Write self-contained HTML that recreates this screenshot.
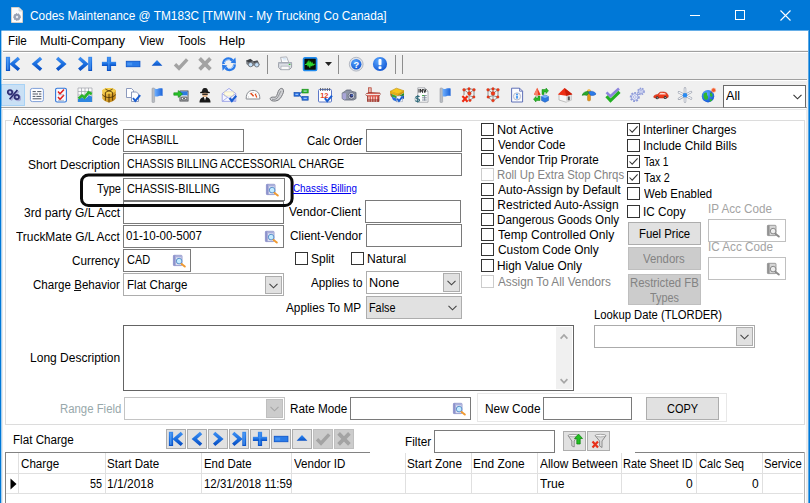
<!DOCTYPE html>
<html><head><meta charset="utf-8"><title>Codes Maintenance</title>
<style>

html,body{margin:0;padding:0;background:#fff;}
body{width:810px;height:503px;overflow:hidden;position:relative;font-family:"Liberation Sans",sans-serif;font-size:12px;}
#win{position:absolute;left:0;top:0;width:810px;height:503px;overflow:hidden;background:#fff;}
#win *{box-sizing:border-box;}
.a{position:absolute;}
.t{position:absolute;transform-origin:0 0;white-space:pre;line-height:14px;font-size:12px;font-family:"Liberation Sans",sans-serif;}
.in{position:absolute;background:#fff;border:1px solid #7a7a7a;}
.ind{position:absolute;background:#fff;border:1px solid #c0c0c0;}
.cb{position:absolute;width:13px;height:13px;background:#fff;border:1px solid #333;}
.cbd{position:absolute;width:13px;height:13px;background:#fff;border:1px solid #ccc;}
.btn{position:absolute;background:#e1e1e1;border:1px solid #adadad;}
.btnd{position:absolute;background:#ccc;border:1px solid #bfbfbf;}
.dd{position:absolute;background:#e1e1e1;border:1px solid #adadad;}
.ic{position:absolute;width:16px;height:16px;overflow:visible;z-index:2;}
.hl{position:absolute;height:1px;}
.vl{position:absolute;width:1px;}

</style></head>
<body>
<svg width="0" height="0" style="position:absolute">
<defs>
<linearGradient id="gb" x1="0" y1="0" x2="0" y2="1"><stop offset="0" stop-color="#3b8cf0"/><stop offset=".5" stop-color="#1b6fe0"/><stop offset="1" stop-color="#0a50c4"/></linearGradient>
<linearGradient id="gbh" x1="0" y1="0" x2="1" y2="0"><stop offset="0" stop-color="#4a9af5"/><stop offset="1" stop-color="#0a50c4"/></linearGradient>
<radialGradient id="gball" cx=".4" cy=".3" r=".8"><stop offset="0" stop-color="#5aa8ff"/><stop offset="1" stop-color="#0b4fd0"/></radialGradient>
<linearGradient id="ggold" x1="0" y1="0" x2="1" y2="1"><stop offset="0" stop-color="#ffd75a"/><stop offset="1" stop-color="#b8780a"/></linearGradient>
<linearGradient id="gflag" x1="0" y1="0" x2="1" y2="0"><stop offset="0" stop-color="#6fb0ff"/><stop offset="1" stop-color="#1a62d8"/></linearGradient>

<symbol id="first" viewBox="0 0 16 16"><path d="M13.9 2 L7.1 7.9 L13.9 13.8" fill="none" stroke="url(#gb)" stroke-width="3.5"/><rect x="0.9" y="0.8" width="4.2" height="14.2" fill="url(#gb)"/><rect x="1.9" y="1.8" width="1.6" height="12" fill="#5aa4f8" opacity=".7"/></symbol>
<symbol id="prev" viewBox="0 0 16 16"><path d="M12.1 2 L5.3 7.9 L12.1 13.8" fill="none" stroke="url(#gb)" stroke-width="3.5"/></symbol>
<symbol id="next" viewBox="0 0 16 16"><path d="M4.1 2 L10.9 7.9 L4.1 13.8" fill="none" stroke="url(#gb)" stroke-width="3.5"/></symbol>
<symbol id="last" viewBox="0 0 16 16"><path d="M2.2 2 L9 7.9 L2.2 13.8" fill="none" stroke="url(#gb)" stroke-width="3.5"/><rect x="11.3" y="0.8" width="3.8" height="14.2" fill="url(#gb)"/><rect x="12.3" y="1.8" width="1.5" height="12" fill="#5aa4f8" opacity=".7"/></symbol>
<symbol id="plus" viewBox="0 0 16 16"><rect x="5.9" y="0.8" width="4.2" height="14.2" fill="url(#gb)"/><rect x="0.9" y="5.8" width="14.2" height="4.2" fill="url(#gb)"/><rect x="7" y="1.8" width="1.6" height="12" fill="#4a9af5" opacity=".6"/></symbol>
<symbol id="minus" viewBox="0 0 16 16"><rect x="1.3" y="5.3" width="13.6" height="5.4" fill="#2a7be8" stroke="#0f58cc" stroke-width=".9"/><rect x="2.2" y="6.6" width="5" height="2.8" fill="#5aa4f8" opacity=".6"/></symbol>
<symbol id="up" viewBox="0 0 16 16"><path d="M8 4 L13.4 9.8 H2.6 Z" fill="url(#gb)"/></symbol>
<symbol id="checkg" viewBox="0 0 16 16"><path d="M2 8.3 L6 12.2 L14.2 3.4" fill="none" stroke="#a3a3a3" stroke-width="3.4"/></symbol>
<symbol id="xg" viewBox="0 0 16 16"><path d="M2.6 2.4 L13.4 13.4 M13.4 2.4 L2.6 13.4" fill="none" stroke="#a3a3a3" stroke-width="3.7"/></symbol>
<symbol id="refresh" viewBox="0 0 16 16"><path d="M2.6 8 C2.2 4 6 1.8 9.5 3 L11.6 4.6" fill="none" stroke="#2a7ae8" stroke-width="2.8"/><path d="M9.6 6.8 L15 7.6 L14.4 1.6 Z" fill="#2a7ae8"/><path d="M13.4 8.4 C13.8 12.4 10 14.6 6.5 13.4 L4.4 11.8" fill="none" stroke="#2a7ae8" stroke-width="2.8"/><path d="M6.4 9.6 L1 8.8 L1.6 14.8 Z" fill="#2a7ae8"/><path d="M3.4 7 C3.6 4.6 6.5 3.2 9 4" fill="none" stroke="#a8d0ff" stroke-width="1"/><path d="M12.6 9.4 C12.4 11.8 9.5 13.2 7 12.4" fill="none" stroke="#a8d0ff" stroke-width="1"/></symbol>
<symbol id="binoc" viewBox="0 0 16 16"><path d="M1 4.6 L5.5 2.8 L8.2 5.2 L12.5 4.4 L14.8 8.4 L12.6 11 L9 9.6 L7.4 10.2 L4.2 10.4 L1.4 8 Z" fill="#7c8086"/><path d="M1.2 4.8 L5.5 3 L8 5 L3.6 6.4 Z" fill="#3a3d42"/><path d="M8 5.3 L12.4 4.6 L13.6 6.4 L9 7.2 Z" fill="#4a4d52"/><circle cx="5.6" cy="8.6" r="2.2" fill="#c4e0fa" stroke="#686c72" stroke-width=".8"/><circle cx="11.8" cy="8.8" r="2.2" fill="#c4e0fa" stroke="#686c72" stroke-width=".8"/></symbol>
<symbol id="printer" viewBox="0 0 16 16"><path d="M3.6 1.4 L9.6 0.9 L11.8 6.5 H4.8 Z" fill="#fefefe" stroke="#9aa0aa" stroke-width=".8"/><path d="M1.6 6.6 H14.6 V11.4 L12.4 13.6 H3.6 L1.6 11.4 Z" fill="#dcdfe5" stroke="#858b96" stroke-width=".8"/><path d="M4 10.2 H12.2 V13.6 H4 Z" fill="#fbfbfb" stroke="#9a9fa8" stroke-width=".6"/><circle cx="12.6" cy="8.2" r=".9" fill="#34c034"/><path d="M1.6 6.6 H14.6 V7.8 H1.6Z" fill="#b9bec8"/><path d="M5.5 2.6 L9 2.3 M5.9 4 L9.6 3.8" stroke="#b8d4ee" stroke-width=".6"/></symbol>
<symbol id="monitor" viewBox="0 0 16 16"><rect x="1.6" y="1.9" width="13" height="12.6" rx="1.2" fill="#071007" stroke="#1f8bf0" stroke-width="1.7"/><path d="M3 8.5 H4.6 L5.3 6.8 L6.1 10.4 L6.9 4.6 L7.8 11.6 L8.6 5.6 L9.4 10.2 L10.2 7.2 L11 9.2 L11.7 8.2 H13.2" fill="none" stroke="#2bd630" stroke-width="1.15"/></symbol>
<symbol id="help" viewBox="0 0 16 16"><circle cx="8.2" cy="8.2" r="6.9" fill="#dfe3ea" stroke="#a4abb8" stroke-width=".8"/><circle cx="8.2" cy="8.2" r="5.2" fill="url(#gball)"/><text x="8.2" y="11.5" text-anchor="middle" font-family="Liberation Sans" font-weight="bold" font-size="9.2" fill="#fff">?</text></symbol>
<symbol id="info" viewBox="0 0 16 16"><circle cx="8" cy="8" r="7.1" fill="url(#gball)"/><rect x="6.5" y="3" width="3" height="6.2" rx="1" fill="#fff"/><rect x="6.5" y="10.3" width="3" height="2.8" rx=".8" fill="#fff"/></symbol>

<symbol id="pct" viewBox="0 0 16 16"><g fill="none" stroke="#a9abd8" stroke-width="2" transform="translate(1.3,1.1)"><ellipse cx="5" cy="5.2" rx="2.2" ry="2.2"/><ellipse cx="11.8" cy="10" rx="2.2" ry="2.2"/><path d="M12.4 3 L4.6 12.3"/></g><g fill="none" stroke="#2c2c72" stroke-width="1.7"><ellipse cx="5" cy="5.2" rx="2.2" ry="2.2"/><ellipse cx="11.8" cy="10" rx="2.2" ry="2.2"/><path d="M12.4 3 L4.6 12.3"/></g></symbol>
<symbol id="listdoc" viewBox="0 0 16 16"><rect x="1.4" y="1.4" width="13" height="13.2" rx="2" fill="#fdfdff" stroke="#7f9fd8" stroke-width="1"/><path d="M3.6 4.6 H6.8 M8.2 4.6 H12.4 M3.6 7 H9 M10 7 H12.4 M3.6 9.4 H6.4 M7.4 9.4 H12.4 M3.6 11.8 H12.4" stroke="#4e5563" stroke-width="1"/></symbol>
<symbol id="checklist" viewBox="0 0 16 16"><rect x="2.6" y="1.2" width="10.8" height="13.8" rx="1.5" fill="#f8faff" stroke="#2f74d8" stroke-width="1.1"/><path d="M5 4.5 L7 6.8 L11 2.6 M5 10 L7 12.3 L11 8" fill="none" stroke="#e02020" stroke-width="1.5"/><path d="M5 7.8 H11 M5 13.3 H11" stroke="#9aa4b8" stroke-width=".7"/></symbol>
<symbol id="chart" viewBox="0 0 16 16"><rect x="1" y="1" width="14" height="14" fill="#fbfbfb"/><path d="M1 1 V15 M4.5 1 V15 M8 1 V15 M11.5 1 V15 M15 1 V15 M1 1 H15 M1 4.5 H15 M1 8 H15" stroke="#9da2ab" stroke-width=".7"/><path d="M1 15 L1 12 L5 10.5 L8 12 L12 8.5 L15 9.5 V15 Z" fill="#2f86e0"/><path d="M1.5 11.5 L5 8.6 L7.5 10.6 L11.5 5.4 L14.8 7" fill="none" stroke="#2bb42b" stroke-width="2.6"/></symbol>
<symbol id="cube" viewBox="0 0 16 16"><path d="M8 1 C11 1 14.8 2.2 14.8 4 V11 C14.8 13 10 15.4 8 15.4 C6 15.4 1.2 13 1.2 11 V4 C1.2 2.2 5 1 8 1 Z" fill="url(#ggold)"/><path d="M8 1 C11 1 14.8 2.2 14.8 4 C13 6 10 6.8 8 6.8 C6 6.8 3 6 1.2 4 C1.2 2.2 5 1 8 1 Z" fill="#f6cf4a"/><path d="M8 6.8 V15.4 M1.2 7.6 C3 9.6 6 10.6 8 10.6 C10 10.6 13 9.6 14.8 7.6 M4.4 2 C6 3.4 9.5 4.2 11.6 5.4 V13.6 M11.6 2 C10 3.4 6.5 4.2 4.4 5.4 V13.6" fill="none" stroke="#4e3304" stroke-width=".9"/></symbol>
<symbol id="docs" viewBox="0 0 16 16"><path d="M1.5 1.5 H6.5 L8.5 3.5 V10.5 H1.5 Z" fill="#fff" stroke="#7f8fb5" stroke-width=".9"/><path d="M6.5 5 H11.5 L13.5 7 V14.5 H6.5 Z" fill="#fff" stroke="#7f8fb5" stroke-width=".9"/><path d="M8 11 L10.3 14 L15.2 8.2" fill="none" stroke="#1a5ed0" stroke-width="2"/></symbol>
<symbol id="flag" viewBox="0 0 16 16"><rect x="3" y="1" width="2.6" height="14.5" rx=".8" fill="#b9bcc2" stroke="#8d9198" stroke-width=".5"/><path d="M5.6 1.6 C8 2.8 10 .6 13.6 1.4 V9 C10 8.2 8 10.4 5.6 9.2 Z" fill="url(#gflag)"/></symbol>
<symbol id="arrowbox" viewBox="0 0 16 16"><rect x="7" y="4" width="8" height="10" fill="#fff" stroke="#3a3d42" stroke-width=".9"/><rect x="7.4" y="4.4" width="7.2" height="4" fill="#2d7be0"/><path d="M8.3 10 H13.8 V13 H8.3 Z M9.6 10.6 L12.5 12.4 M12.5 10.6 L9.6 12.4" fill="none" stroke="#3a3d42" stroke-width=".8"/><path d="M0.8 5.8 H5.2 V3.6 L9.6 7 L5.2 10.4 V8.2 H0.8 Z" fill="#28c428" stroke="#148a14" stroke-width=".6"/></symbol>
<symbol id="spy" viewBox="0 0 16 16"><path d="M2.5 15.5 C2.5 11.5 5 10 8 10 C11 10 13.5 11.5 13.5 15.5 Z" fill="#181818"/><ellipse cx="8" cy="7" rx="2.8" ry="3.2" fill="#e2b48a"/><path d="M6.8 10 L8 13.5 L9.2 10 Z" fill="#f2f2f2"/><path d="M3 5.3 C5 4 11 4 13 5.3 L12.5 6.3 C10 5.6 6 5.6 3.5 6.3 Z" fill="#111"/><path d="M5 5 C5 1.5 6.5 1 8 1 C9.5 1 11 1.5 11 5 Z" fill="#1c1c1c"/><rect x="5.3" y="6.6" width="5.4" height="1.3" fill="#222"/></symbol>
<symbol id="envelope" viewBox="0 0 16 16"><path d="M1.2 6.6 L8 1.4 L14.8 6.6 V14.4 H1.2 Z" fill="#f6f7ff" stroke="#9aa2e6" stroke-width=".9"/><path d="M3.4 4.8 H12.6 V9 H3.4 Z" fill="#fffbe0" stroke="#dcd8a8" stroke-width=".5"/><path d="M1.2 6.6 L8 11.4 L14.8 6.6 M1.2 14.4 L6.5 10.4 M14.8 14.4 L9.5 10.4" fill="none" stroke="#9aa2e6" stroke-width=".8"/><path d="M8.6 11.2 L10.8 14 L15.2 8.8" fill="none" stroke="#1a5ed0" stroke-width="2.1"/></symbol>
<symbol id="gauge" viewBox="0 0 16 16"><path d="M1.2 11.4 C1.2 5.5 4.5 3.4 8 3.4 C11.5 3.4 14.8 5.5 14.8 11.4 V12 H1.2 Z" fill="#fdfdfd" stroke="#85898f" stroke-width="1"/><path d="M3 10.2 L3.8 9.8 M4.6 6.6 L5.3 7.2 M8 5 V6 M11.4 6.6 L10.7 7.2" stroke="#999" stroke-width=".7"/><path d="M5.6 6 L8.6 9.2" stroke="#e04818" stroke-width="1.4"/><path d="M10.2 6.8 L11.8 10.4" stroke="#e04818" stroke-width="1.2"/></symbol>
<symbol id="phone" viewBox="0 0 16 16"><path d="M13 1.5 C15 2 15 5 13.5 7.5 C12 10.5 10.5 13.5 6.5 14 C3.5 14.4 1 13.5 1.2 11.5 C1.5 9.8 4.5 10 6.5 10.2 C8.5 8.5 8.5 5 10 3 C11 1.5 12 1.2 13 1.5 Z" fill="#cfd0d3" stroke="#77797e" stroke-width="1"/><path d="M3 12.2 C4.5 12.8 6.5 12.5 8 11.2 C9.5 9.5 10.5 6.5 12 4" fill="none" stroke="#8b8d92" stroke-width=".9"/></symbol>
<symbol id="tree" viewBox="0 0 16 16"><path d="M6 7.4 L9.4 4.4 M6 7.4 L9.4 11.4" stroke="#2b66c8" stroke-width="1.1"/><rect x="1" y="5.4" width="5.6" height="3.8" fill="#2a6fe0" stroke="#124aa8" stroke-width=".6"/><rect x="9" y="2.2" width="6.2" height="3.8" fill="#2fb52f" stroke="#148a14" stroke-width=".6"/><rect x="9" y="9.4" width="6.2" height="3.8" fill="#2a6fe0" stroke="#124aa8" stroke-width=".6"/><path d="M2.4 7.3 H5.2 M10.6 4.1 H13.8 M10.6 11.3 H13.8" stroke="#cfe6ff" stroke-width=".9"/></symbol>
<symbol id="calendar" viewBox="0 0 16 16"><rect x="1.5" y="2.5" width="13" height="12.5" rx="1" fill="#fdfdff" stroke="#5d78c8" stroke-width="1"/><path d="M3.5 1 V4 M5.8 1 V4 M8.1 1 V4 M10.4 1 V4 M12.6 1 V4" stroke="#5b5f68" stroke-width=".9"/><text x="3.2" y="10.6" font-family="Liberation Sans" font-weight="bold" font-size="7.5" fill="#e8441a">12</text><path d="M7.8 11.2 L10.2 14.2 L15 8.6" fill="none" stroke="#1a5ed0" stroke-width="2"/></symbol>
<symbol id="camera" viewBox="0 0 16 16"><path d="M1.2 6 L3.8 4.6 L5.4 3 H9.6 L11 4.4 L15 5.4 V11.6 L12.4 13 H3.4 L1.2 11.6 Z" fill="#8e95a6" stroke="#5d6374" stroke-width=".8"/><path d="M1.4 6.2 H5 V12 L3.4 12.8 L1.4 11.5 Z" fill="#a9a6d8"/><circle cx="10.4" cy="8.8" r="3.3" fill="#dfe3ec" stroke="#5d6374" stroke-width=".8"/><circle cx="10.4" cy="8.8" r="2" fill="#33386a"/><circle cx="11" cy="8.3" r=".8" fill="#4a7ae8"/></symbol>
<symbol id="factory" viewBox="0 0 16 16"><rect x="3.6" y=".8" width="2.6" height="6" fill="#e8b8b0" stroke="#b03a2a" stroke-width=".7"/><path d="M1 7 L4 5.5 L15 6 V8 L14 8.5 V14.5 H2.5 V9 L1 8.2 Z" fill="#d8564a" stroke="#8a2a20" stroke-width=".7"/><path d="M1 7 L15 6.8 V8 L1 8.3 Z" fill="#f2e4e0"/><path d="M4 9.5 V14.5 M6.5 9.5 V14.5 M9 9.5 V14.5 M11.5 9.5 V14.5" stroke="#f6d8d2" stroke-width="1.2"/><path d="M2.5 13 H14" stroke="#7a2018" stroke-width=".8"/></symbol>
<symbol id="books" viewBox="0 0 16 16"><path d="M1 4.4 L7.4 1.2 L15 3.8 L9 7.2 Z" fill="#f6c61c" stroke="#b88a08" stroke-width=".6"/><path d="M1 4.4 L9 7.2 V9.2 L1 6.4 Z" fill="#e6ac10"/><path d="M9 7.2 L15 3.8 V5.8 L9 9.2 Z" fill="#cc9808"/><path d="M1.3 6.6 L9 9.4 V11.8 L2 9.4 Z" fill="#36a836"/><path d="M9 9.4 L15 6 V8.4 L9 11.8 Z" fill="#268a26"/><path d="M1.3 6.6 L2.3 7 L3 9.8 L2 9.4 Z" fill="#e03a2a"/><path d="M2.4 9.6 L9 12 V15.2 L4 13 Z" fill="#2a6fe0"/><path d="M9 12 L15 8.6 V11.4 L9 15.2 Z" fill="#1a52b8"/><rect x="7.6" y="9" width="6" height="5.8" fill="#f4f6fb" stroke="#8f98ad" stroke-width=".5"/><path d="M8.2 11.6 L10 14 L13.6 9.4" fill="none" stroke="#1a5ed0" stroke-width="1.8"/></symbol>
<symbol id="inv" viewBox="0 0 16 16"><path d="M4.8 .8 H11.6 L15 4.2 V15.2 H4.8 Z" fill="#fcfcfc" stroke="#9a9da3" stroke-width=".8"/><path d="M11.6 .8 V4.2 H15" fill="none" stroke="#9a9da3" stroke-width=".7"/><path d="M6 2 V5.6 M7.4 5.6 V2 L9.6 5.6 V2 M10.6 2 L11.8 5.6 L13 2" fill="none" stroke="#222" stroke-width=".95"/><path d="M9 8.6 H13.8 M9 10.8 H13.8 M9 13 H13.8 M11.6 8 V13.6" stroke="#7a8796" stroke-width=".9"/><path d="M9.2 8.6 H11.2" stroke="#3ab03a" stroke-width="1"/><path d="M6.4 10 C6 9 2.8 8.8 2.8 10.4 C2.8 12 6.6 11.6 6.6 13.2 C6.6 14.8 3 14.8 2.4 13.6" fill="none" stroke="#2e6a7a" stroke-width="1.2"/><path d="M4.6 8.2 V15.6" stroke="#2e6a7a" stroke-width=".9"/><path d="M1.2 11.4 H5 M1.2 12.8 H5" stroke="#2e6a7a" stroke-width=".5" opacity=".5"/></symbol>
<symbol id="mol" viewBox="0 0 16 16"><path d="M3 2.6 L8 1.6 L13 2.6 V10.2 L8 14 L3 10.2 Z M3 2.6 L8 6.6 L13 2.6 M8 6.6 V14 M8 1.6 V6.6 M3 10.2 L8 8.6 L13 10.2" fill="none" stroke="#7a7a7a" stroke-width=".8"/><g fill="#f03a18" stroke="#b01e08" stroke-width=".3"><circle cx="8" cy="1.9" r="1.3"/><circle cx="3" cy="2.8" r="1.4"/><circle cx="13" cy="2.8" r="1.4"/><circle cx="8" cy="6.4" r="1.9"/><circle cx="3.2" cy="10" r="1.3"/><circle cx="12.8" cy="10" r="1.3"/><circle cx="8" cy="13.6" r="1.4"/></g></symbol>
<symbol id="molx" viewBox="0 0 16 16"><path d="M3 2.6 L8 1.6 L13 2.6 V10.2 L8 14 M3 2.6 L8 6.6 L13 2.6 M8 6.6 V14 M8 1.6 V6.6 M8 8.6 L13 10.2 M3 2.6 V8" fill="none" stroke="#7a7a7a" stroke-width=".8"/><g fill="#f03a18" stroke="#b01e08" stroke-width=".3"><circle cx="8" cy="1.9" r="1.3"/><circle cx="3" cy="2.8" r="1.4"/><circle cx="13" cy="2.8" r="1.4"/><circle cx="8.4" cy="6.4" r="1.8"/><circle cx="12.8" cy="10" r="1.3"/><circle cx="9" cy="13.4" r="1.2"/></g><path d="M1.4 9 L6.6 14.8 M6.6 9 L1.4 14.8" stroke="#ee2a12" stroke-width="2.1"/></symbol>
<symbol id="infodoc" viewBox="0 0 16 16"><path d="M2.6 1.2 H10.6 L13.6 4.2 V15 H2.6 Z" fill="#fbfcff" stroke="#4f62b0" stroke-width=".9"/><path d="M10.6 1.2 V4.2 H13.6" fill="none" stroke="#4f62b0" stroke-width=".8"/><circle cx="8" cy="9.4" r="3.6" fill="#f2f3f7" stroke="#b4b8c6" stroke-width=".9"/><rect x="7.2" y="8.8" width="1.6" height="2.8" fill="#2a8af0"/><circle cx="8" cy="7.4" r=".9" fill="#2a8af0"/></symbol>
<symbol id="shapes" viewBox="0 0 16 16"><path d="M4.2 .8 L7.6 7.6 C6 8.8 2.6 8.8 1 7.6 Z" fill="#e83a1a"/><path d="M4.2 .8 L5.2 7.9 C4 8.3 2.4 8.2 1 7.6 Z" fill="#f8806a"/><path d="M9 2.5 H13 V1 L15.5 3.8 L13 6.6 V5 H11 V7.5 H9 Z" fill="#2ab82a" stroke="#0f8a0f" stroke-width=".5"/><path d="M7 13.5 H3 V15 L.5 12.2 L3 9.4 V11 H5 V9 H7 Z" fill="#2ab82a" stroke="#0f8a0f" stroke-width=".5"/><path d="M8.5 9.5 L12 8 L15.5 9.5 V13.5 L12 15.3 L8.5 13.5 Z" fill="#2a78e0" stroke="#1450b0" stroke-width=".5"/><path d="M8.5 9.5 L12 11 L15.5 9.5 L12 8 Z" fill="#7ab4f8"/></symbol>
<symbol id="house" viewBox="0 0 16 16"><path d="M2 7.5 H14.5 V13 L9 15.2 L2 13 Z" fill="#f6f6f6" stroke="#a8a8a8" stroke-width=".7"/><path d="M9 8 V15.2 L14.5 13 V7.5 Z" fill="#dedede"/><path d="M0.8 7.6 L7.5 1 L15.4 7.2 L9.2 8.8 Z" fill="#ee2e14"/><path d="M7.5 1 L15.4 7.2 L9.2 8.8 Z" fill="#c81c08"/><rect x="10.8" y="9.5" width="2" height="3.8" fill="#555"/></symbol>
<symbol id="umbrella" viewBox="0 0 16 16"><rect x="6.6" y="3" width="2.8" height="10.8" rx=".9" fill="#e89a1a" stroke="#a86408" stroke-width=".5"/><path d="M1.2 8.4 C1.4 6 4 4.2 7.6 4.4 C8.4 5.6 7.6 7.4 5.6 8.4 C4 8 2.4 8 1.2 8.4 Z" fill="#2aa82a" stroke="#0f7a0f" stroke-width=".5"/><path d="M7.6 4.6 C10 3.6 14 4.4 15 7 C14 8.4 11.5 8.8 9.4 8.2 C8.4 7.2 7.8 6 7.6 4.6 Z" fill="#2a7ae8" stroke="#1450b0" stroke-width=".5"/><rect x="6.4" y="2.4" width="3.2" height="1.8" rx=".8" fill="#f8c040"/></symbol>
<symbol id="checks" viewBox="0 0 16 16"><path d="M1.5 5.3 L5.5 9.3 L14 1.5" fill="none" stroke="#8d84dc" stroke-width="2.6"/><path d="M1.5 9.3 L5.5 13.6 L14.5 4.8" fill="none" stroke="#22b022" stroke-width="3.1"/></symbol>
<symbol id="gears" viewBox="0 0 16 16"><g fill="#e8ecfa" stroke="#8f9bd8"><circle cx="5.8" cy="10" r="3.9" stroke-dasharray="1.7 1.2" stroke-width="2.2"/><circle cx="5.8" cy="10" r="3.3" stroke-width=".9"/><circle cx="12" cy="4.4" r="2.9" stroke-dasharray="1.4 1" stroke-width="1.9"/><circle cx="12" cy="4.4" r="2.4" stroke-width=".8"/></g><circle cx="5.8" cy="10" r="1.3" fill="#fff" stroke="#8f9bd8" stroke-width=".7"/><circle cx="12" cy="4.4" r="1" fill="#fff" stroke="#8f9bd8" stroke-width=".7"/></symbol>
<symbol id="car" viewBox="0 0 16 16"><path d="M0.8 9.4 C1 8.2 3 7.6 4.6 7.4 L7 5.2 C9 4.7 12 4.9 13.4 5.8 L15.2 8.2 V10.2 L13.6 11 H2.4 L0.8 10.4 Z" fill="#ee3a1a" stroke="#b02008" stroke-width=".5"/><path d="M5.8 7.4 L7.6 5.8 C9 5.5 11 5.6 12.2 6.2 L13 7.6 Z" fill="#fbd8d0"/><circle cx="4.2" cy="10.8" r="1.5" fill="#333"/><circle cx="12.2" cy="10.6" r="1.5" fill="#333"/><circle cx="4.2" cy="10.8" r=".6" fill="#ccc"/><circle cx="12.2" cy="10.6" r=".6" fill="#ccc"/></symbol>
<symbol id="star" viewBox="0 0 16 16"><path d="M8 1.6 V14.6 M2 5.4 L14 11.4 M14 5 L2 11.8" stroke="#9aa0ad" stroke-width="2.5" stroke-linecap="round"/><path d="M8 1.6 V14.6 M2 5.4 L14 11.4 M14 5 L2 11.8" stroke="#f4f5f8" stroke-width="1.2" stroke-linecap="round"/><circle cx="8" cy="8.2" r="2.3" fill="#2a8af0"/></symbol>
<symbol id="globe" viewBox="0 0 16 16"><circle cx="7" cy="9.2" r="6.2" fill="url(#gball)"/><path d="M3 6.4 C4.5 4.9 6.5 5.4 6 7.2 C5.5 8.4 7.5 8.9 7 10.9 C6.5 12.9 4.5 13.4 3.5 11.9 C2.5 10.4 2 7.9 3 6.4 Z M9 5.9 C10.5 5.4 12 6.9 11.5 8.9 C11 10.4 9.5 9.9 9 8.4 Z M8.5 12.4 C9.5 11.4 11.5 11.9 11 13.4 C10 14.9 8.5 14.9 8.5 12.4 Z" fill="#2fb82f"/><path d="M9.5 6 L12 3.6" stroke="#444" stroke-width=".8"/><circle cx="12.6" cy="3.2" r="2.1" fill="#f05a28" stroke="#fbb09a" stroke-width=".7"/></symbol>

<symbol id="lookup" viewBox="0 0 14 14"><rect x="1.4" y="1.3" width="8.6" height="10.3" rx=".8" fill="#dcdff0" stroke="#8489c4" stroke-width=".8"/><rect x="1.4" y="1.3" width="2.2" height="10.3" fill="#8d92cc"/><rect x="3.6" y="1.7" width="6" height="1.6" fill="#a9aedc"/><circle cx="7.1" cy="7.1" r="2.8" fill="#c4ecff" stroke="#5f93cc" stroke-width="1"/><path d="M9.6 9.9 L12.8 12.6" stroke="#f09a30" stroke-width="1.9" stroke-linecap="round"/></symbol>
<symbol id="lookupd" viewBox="0 0 14 14"><rect x="1.4" y="1.3" width="8.6" height="10.3" rx=".8" fill="#d6d6d6" stroke="#8c8c8c" stroke-width=".8"/><rect x="1.4" y="1.3" width="2.2" height="10.3" fill="#929292"/><circle cx="7.1" cy="7.1" r="2.8" fill="#ededed" stroke="#8a8a8a" stroke-width="1"/><path d="M9.6 9.9 L12.8 12.6" stroke="#8a8a8a" stroke-width="1.9" stroke-linecap="round"/></symbol>
<symbol id="funnelup" viewBox="0 0 16 16"><path d="M1 2.5 C3 1.2 9 1.2 11 2.5 L7.2 8 V14 L4.8 12.8 V8 Z" fill="#dcdcdc" stroke="#7a7a7a" stroke-width=".8"/><ellipse cx="6" cy="2.6" rx="4.8" ry="1.2" fill="#f4f4f4" stroke="#8a8a8a" stroke-width=".6"/><path d="M11.5 1 L15.5 5.5 H13.2 V11 H9.8 V5.5 H7.5 Z" fill="#22c022" stroke="#0a800a" stroke-width=".7"/></symbol>
<symbol id="funnelx" viewBox="0 0 16 16"><path d="M4 2.5 C6 1.2 13 1.2 15 2.5 L11 8 V14.5 L8.6 13 V8 Z" fill="#dcdcdc" stroke="#7a7a7a" stroke-width=".8"/><ellipse cx="9.5" cy="2.6" rx="5.3" ry="1.3" fill="#f4f4f4" stroke="#8a8a8a" stroke-width=".6"/><path d="M1.5 8.5 L7 14.5 M7 8.5 L1.5 14.5" stroke="#e8301a" stroke-width="2.2"/></symbol>
</defs></svg>

<div id="win">
<div class="a" style="left:0;top:0;width:810px;height:30px;background:#0078d7"></div>
<div class="a" style="left:0;top:30px;width:810px;height:1px;background:#66aee7"></div>
<div class="a" style="left:0;top:30px;width:1px;height:473px;background:#0078d7"></div>
<div class="a" style="left:1px;top:30px;width:1px;height:473px;background:rgba(0,120,215,.35);z-index:5"></div>
<div class="a" style="left:806px;top:108px;width:2px;height:395px;background:#ececec;z-index:5"></div>
<div class="a" style="left:808px;top:30px;width:1px;height:473px;background:#59a7e4;z-index:5"></div>
<div class="a" style="left:809px;top:30px;width:1px;height:473px;background:#0078d7;z-index:5"></div>
<svg class="a" style="left:11px;top:7px" width="12" height="16" viewBox="0 0 12 16"><path d="M0.5 0.5 H8 L11.5 4 V15.5 H0.5 Z" fill="#fbfbfb" stroke="#d8d0c8" stroke-width="1"/><path d="M8 0.5 V4 H11.5" fill="#e8e8e8" stroke="#c8c8c8" stroke-width=".6"/><circle cx="6" cy="10" r="3.2" fill="#9aa3b5"/><circle cx="6" cy="10" r="1.2" fill="#e8ebf2"/><circle cx="6" cy="10" r="3.4" fill="none" stroke="#8891a6" stroke-width="1" stroke-dasharray="1.3 1.1"/></svg>
<div class="a" style="left:690px;top:15px;width:10px;height:1px;background:#fff"></div>
<div class="a" style="left:735px;top:10px;width:10px;height:10px;border:1px solid #fff"></div>
<svg class="a" style="left:780px;top:10px" width="11" height="11" viewBox="0 0 11 11"><path d="M0.5 0.5 L10.5 10.5 M10.5 0.5 L0.5 10.5" stroke="#fff" stroke-width="1.1"/></svg>
<div class="a" style="left:1px;top:50px;width:808px;height:58px;background:#f0f0f0"></div>
<div class="hl" style="left:3px;top:51px;width:805px;background:#a0a0a0"></div>
<div class="hl" style="left:3px;top:52px;width:805px;background:#fff"></div>
<div class="hl" style="left:3px;top:79px;width:804px;background:#a0a0a0"></div>
<div class="hl" style="left:3px;top:80px;width:804px;background:#fff"></div>
<div class="hl" style="left:1px;top:107px;width:806px;background:#a0a0a0"></div>
<div class="a" style="left:1px;top:108px;width:808px;height:2px;background:#fff"></div>
<div class="a" style="left:2px;top:109px;width:805px;height:400px;border:1px solid #e9e9e9;background:#fff"></div>
<svg class="ic" style="left:5.0px;top:56.0px;width:16px;height:16px" viewBox="0 0 16 16"><use href="#first"/></svg>
<svg class="ic" style="left:29.0px;top:56.0px;width:16px;height:16px" viewBox="0 0 16 16"><use href="#prev"/></svg>
<svg class="ic" style="left:53.0px;top:56.0px;width:16px;height:16px" viewBox="0 0 16 16"><use href="#next"/></svg>
<svg class="ic" style="left:77.0px;top:56.0px;width:16px;height:16px" viewBox="0 0 16 16"><use href="#last"/></svg>
<svg class="ic" style="left:101.0px;top:56.0px;width:16px;height:16px" viewBox="0 0 16 16"><use href="#plus"/></svg>
<svg class="ic" style="left:125.0px;top:56.0px;width:16px;height:16px" viewBox="0 0 16 16"><use href="#minus"/></svg>
<svg class="ic" style="left:149.0px;top:56.0px;width:16px;height:16px" viewBox="0 0 16 16"><use href="#up"/></svg>
<svg class="ic" style="left:173.0px;top:56.0px;width:16px;height:16px" viewBox="0 0 16 16"><use href="#checkg"/></svg>
<svg class="ic" style="left:197.0px;top:56.0px;width:16px;height:16px" viewBox="0 0 16 16"><use href="#xg"/></svg>
<svg class="ic" style="left:221.0px;top:56.0px;width:16px;height:16px" viewBox="0 0 16 16"><use href="#refresh"/></svg>
<svg class="ic" style="left:245.0px;top:56.0px;width:16px;height:16px" viewBox="0 0 16 16"><use href="#binoc"/></svg>
<div class="vl" style="left:267px;top:55px;height:19px;background:#8d8d8d"></div>
<div class="vl" style="left:338px;top:55px;height:19px;background:#8d8d8d"></div>
<div class="vl" style="left:395px;top:55px;height:19px;background:#8d8d8d"></div>
<div class="vl" style="left:402px;top:55px;height:19px;background:#8d8d8d"></div>
<svg class="ic" style="left:277.0px;top:56.0px;width:16px;height:16px" viewBox="0 0 16 16"><use href="#printer"/></svg>
<svg class="ic" style="left:301.5px;top:56.0px;width:16px;height:16px" viewBox="0 0 16 16"><use href="#monitor"/></svg>
<svg class="a" style="left:325px;top:62px" width="7" height="4" viewBox="0 0 7 4"><path d="M0 0 H7 L3.5 4 Z" fill="#222"/></svg>
<svg class="ic" style="left:348.0px;top:56.0px;width:16px;height:16px" viewBox="0 0 16 16"><use href="#help"/></svg>
<svg class="ic" style="left:372.0px;top:56.0px;width:16px;height:16px" viewBox="0 0 16 16"><use href="#info"/></svg>
<div class="a" style="left:1px;top:84px;width:24px;height:22px;background:#c9e0f5;border:1px solid #a8d2f5"></div>
<svg class="ic" style="left:5.0px;top:87.0px;width:16px;height:16px" viewBox="0 0 16 16"><use href="#pct"/></svg>
<svg class="ic" style="left:29.0px;top:87.0px;width:16px;height:16px" viewBox="0 0 16 16"><use href="#listdoc"/></svg>
<svg class="ic" style="left:53.0px;top:87.0px;width:16px;height:16px" viewBox="0 0 16 16"><use href="#checklist"/></svg>
<svg class="ic" style="left:77.0px;top:87.0px;width:16px;height:16px" viewBox="0 0 16 16"><use href="#chart"/></svg>
<svg class="ic" style="left:101.0px;top:87.0px;width:16px;height:16px" viewBox="0 0 16 16"><use href="#cube"/></svg>
<svg class="ic" style="left:125.0px;top:87.0px;width:16px;height:16px" viewBox="0 0 16 16"><use href="#docs"/></svg>
<svg class="ic" style="left:149.0px;top:87.0px;width:16px;height:16px" viewBox="0 0 16 16"><use href="#flag"/></svg>
<svg class="ic" style="left:173.0px;top:87.0px;width:16px;height:16px" viewBox="0 0 16 16"><use href="#arrowbox"/></svg>
<svg class="ic" style="left:197.0px;top:87.0px;width:16px;height:16px" viewBox="0 0 16 16"><use href="#spy"/></svg>
<svg class="ic" style="left:221.0px;top:87.0px;width:16px;height:16px" viewBox="0 0 16 16"><use href="#envelope"/></svg>
<svg class="ic" style="left:245.0px;top:87.0px;width:16px;height:16px" viewBox="0 0 16 16"><use href="#gauge"/></svg>
<svg class="ic" style="left:269.0px;top:87.0px;width:16px;height:16px" viewBox="0 0 16 16"><use href="#phone"/></svg>
<svg class="ic" style="left:293.0px;top:87.0px;width:16px;height:16px" viewBox="0 0 16 16"><use href="#tree"/></svg>
<svg class="ic" style="left:317.0px;top:87.0px;width:16px;height:16px" viewBox="0 0 16 16"><use href="#calendar"/></svg>
<svg class="ic" style="left:341.0px;top:87.0px;width:16px;height:16px" viewBox="0 0 16 16"><use href="#camera"/></svg>
<svg class="ic" style="left:365.0px;top:87.0px;width:16px;height:16px" viewBox="0 0 16 16"><use href="#factory"/></svg>
<svg class="ic" style="left:389.0px;top:87.0px;width:16px;height:16px" viewBox="0 0 16 16"><use href="#books"/></svg>
<svg class="ic" style="left:413.0px;top:87.0px;width:16px;height:16px" viewBox="0 0 16 16"><use href="#inv"/></svg>
<svg class="ic" style="left:437.0px;top:87.0px;width:16px;height:16px" viewBox="0 0 16 16"><use href="#flag"/></svg>
<svg class="ic" style="left:461.0px;top:87.0px;width:16px;height:16px" viewBox="0 0 16 16"><use href="#molx"/></svg>
<svg class="ic" style="left:485.0px;top:87.0px;width:16px;height:16px" viewBox="0 0 16 16"><use href="#mol"/></svg>
<svg class="ic" style="left:509.0px;top:87.0px;width:16px;height:16px" viewBox="0 0 16 16"><use href="#infodoc"/></svg>
<svg class="ic" style="left:533.0px;top:87.0px;width:16px;height:16px" viewBox="0 0 16 16"><use href="#shapes"/></svg>
<svg class="ic" style="left:557.0px;top:87.0px;width:16px;height:16px" viewBox="0 0 16 16"><use href="#house"/></svg>
<svg class="ic" style="left:581.0px;top:87.0px;width:16px;height:16px" viewBox="0 0 16 16"><use href="#umbrella"/></svg>
<svg class="ic" style="left:605.0px;top:87.0px;width:16px;height:16px" viewBox="0 0 16 16"><use href="#checks"/></svg>
<svg class="ic" style="left:629.0px;top:87.0px;width:16px;height:16px" viewBox="0 0 16 16"><use href="#gears"/></svg>
<svg class="ic" style="left:653.0px;top:87.0px;width:16px;height:16px" viewBox="0 0 16 16"><use href="#car"/></svg>
<svg class="ic" style="left:677.0px;top:87.0px;width:16px;height:16px" viewBox="0 0 16 16"><use href="#star"/></svg>
<svg class="ic" style="left:701.0px;top:87.0px;width:16px;height:16px" viewBox="0 0 16 16"><use href="#globe"/></svg>
<div class="a" style="left:723px;top:85px;width:83px;height:23px;background:#fff;border:1px solid #6a6a6a;border-bottom-color:#8a8a8a"></div>
<svg class="a" style="left:793px;top:94px" width="9" height="6" viewBox="0 0 9 6"><path d="M0.5 0.8 L4.5 4.8 L8.5 0.8" fill="none" stroke="#333" stroke-width="1.1"/></svg>
<div class="a" style="left:5px;top:120px;width:800px;height:305px;border:1px solid #dcdcdc"></div>
<div class="a" style="left:12.5px;top:114px;width:107px;height:14px;background:#fff"></div>
<div class="in" style="left:123px;top:129px;width:121px;height:23px;"></div>
<div class="in" style="left:366px;top:129px;width:96px;height:23px;"></div>
<div class="in" style="left:123px;top:153px;width:339px;height:23px;"></div>
<div class="in" style="left:123px;top:178px;width:162px;height:23px;"></div>
<div class="in" style="left:123px;top:201px;width:161px;height:23px;"></div>
<div class="in" style="left:365px;top:200px;width:96px;height:23px;"></div>
<div class="in" style="left:123px;top:225px;width:161px;height:23px;"></div>
<div class="in" style="left:366px;top:224px;width:96px;height:23px;"></div>
<div class="in" style="left:123px;top:249px;width:68px;height:23px;"></div>
<div class="in" style="left:123px;top:273px;width:161px;height:23px;border-color:#adadad;"></div>
<div class="dd" style="left:265px;top:276px;width:17px;height:18px"></div>
<svg class="a" style="left:269px;top:283px" width="9" height="6" viewBox="0 0 9 6"><path d="M0.5 0.8 L4.5 4.8 L8.5 0.8" fill="none" stroke="#444" stroke-width="1.1"/></svg>
<div class="in" style="left:366px;top:271px;width:96px;height:23px;border-color:#adadad;"></div>
<div class="dd" style="left:443px;top:273px;width:17px;height:19px"></div>
<svg class="a" style="left:447px;top:280px" width="9" height="6" viewBox="0 0 9 6"><path d="M0.5 0.8 L4.5 4.8 L8.5 0.8" fill="none" stroke="#444" stroke-width="1.1"/></svg>
<div class="a" style="left:366px;top:296px;width:96px;height:23px;background:#e1e1e1;border:1px solid #adadad"></div>
<svg class="a" style="left:448.3px;top:305.3px" width="9" height="6" viewBox="0 0 9 6"><path d="M0.5 0.8 L4.5 4.8 L8.5 0.8" fill="none" stroke="#444" stroke-width="1.1"/></svg>
<svg class="ic" style="left:265.3px;top:183.2px;width:14px;height:14px" viewBox="0 0 16 16"><use href="#lookup"/></svg>
<svg class="ic" style="left:264.3px;top:230.2px;width:14px;height:14px" viewBox="0 0 16 16"><use href="#lookup"/></svg>
<svg class="ic" style="left:172.3px;top:254.2px;width:14px;height:14px" viewBox="0 0 16 16"><use href="#lookup"/></svg>
<svg class="ic" style="left:452.3px;top:402.2px;width:14px;height:14px" viewBox="0 0 16 16"><use href="#lookup"/></svg>
<svg class="a" style="left:70px;top:165px" width="240" height="50" viewBox="70 165 240 50"><rect x="81.5" y="174.9" width="210.6" height="30.6" rx="7" ry="7" fill="none" stroke="#0a0a0a" stroke-width="3"/></svg>
<div class="hl" style="left:74px;top:290px;width:7px;background:#111"></div>
<div class="cb" style="left:295px;top:252px"></div>
<div class="cb" style="left:351px;top:252px"></div>
<div class="in" style="left:123px;top:325px;width:451px;height:66px;border-color:#646464;"></div>
<div class="a" style="left:556px;top:327px;width:16px;height:62px;background:#f0f0f0"></div>
<svg class="a" style="left:559.5px;top:332.5px" width="8" height="7" viewBox="0 0 8 7"><path d="M0.6 5.6 L4 2 L7.4 5.6" fill="none" stroke="#a6a6a6" stroke-width="1.7"/></svg>
<svg class="a" style="left:559.5px;top:377.5px" width="8" height="7" viewBox="0 0 8 7"><path d="M0.6 1.2 L4 4.8 L7.4 1.2" fill="none" stroke="#a6a6a6" stroke-width="1.7"/></svg>
<div class="ind" style="left:124px;top:397px;width:161px;height:23px;border-color:#c4c4c4;"></div>
<div class="a" style="left:266px;top:399px;width:17px;height:19px;background:#ccc;border:1px solid #bfbfbf"></div>
<svg class="a" style="left:270px;top:406px" width="9" height="6" viewBox="0 0 9 6"><path d="M0.5 0.8 L4.5 4.8 L8.5 0.8" fill="none" stroke="#a6a6a6" stroke-width="1.1"/></svg>
<div class="in" style="left:350px;top:397px;width:121px;height:23px;"></div>
<div class="a" style="left:477px;top:393px;width:250px;height:29px;border:1px solid #e8e8e8"></div>
<div class="in" style="left:543px;top:397px;width:89px;height:23px;"></div>
<div class="btn" style="left:646px;top:397px;width:73px;height:23px"></div>
<div class="cb" style="left:481px;top:123px"></div>
<div class="cb" style="left:481px;top:138px"></div>
<div class="cb" style="left:481px;top:153px"></div>
<div class="cbd" style="left:481px;top:168px"></div>
<div class="cb" style="left:481px;top:183px"></div>
<div class="cb" style="left:481px;top:198px"></div>
<div class="cb" style="left:481px;top:213px"></div>
<div class="cb" style="left:481px;top:228px"></div>
<div class="cb" style="left:481px;top:243px"></div>
<div class="cb" style="left:481px;top:259px"></div>
<div class="cbd" style="left:481px;top:275px"></div>
<div class="cb" style="left:627px;top:123px"></div>
<svg class="a" style="left:628px;top:124px" width="11" height="11" viewBox="0 0 11 11"><path d="M1.5 5.5 L4.2 8.2 L9.6 2.3" fill="none" stroke="#333" stroke-width="1.05"/></svg>
<div class="cb" style="left:627px;top:139px"></div>
<div class="cb" style="left:627px;top:155px"></div>
<svg class="a" style="left:628px;top:156px" width="11" height="11" viewBox="0 0 11 11"><path d="M1.5 5.5 L4.2 8.2 L9.6 2.3" fill="none" stroke="#333" stroke-width="1.05"/></svg>
<div class="cb" style="left:627px;top:171px"></div>
<svg class="a" style="left:628px;top:172px" width="11" height="11" viewBox="0 0 11 11"><path d="M1.5 5.5 L4.2 8.2 L9.6 2.3" fill="none" stroke="#333" stroke-width="1.05"/></svg>
<div class="cb" style="left:627px;top:187px"></div>
<div class="cb" style="left:627px;top:205px"></div>
<div class="ind" style="left:708px;top:219px;width:78px;height:23px;"></div>
<div class="ind" style="left:708px;top:257px;width:78px;height:23px;"></div>
<svg class="ic" style="left:765.9px;top:224.2px;width:14px;height:14px" viewBox="0 0 16 16"><use href="#lookupd"/></svg>
<svg class="ic" style="left:765.9px;top:262.2px;width:14px;height:14px" viewBox="0 0 16 16"><use href="#lookupd"/></svg>
<div class="btn" style="left:628px;top:222px;width:73px;height:23px"></div>
<div class="btnd" style="left:628px;top:247px;width:73px;height:23px"></div>
<div class="btnd" style="left:628px;top:274px;width:73px;height:31px"></div>
<div class="in" style="left:594px;top:325px;width:161px;height:23px;border-color:#ababab;"></div>
<div class="dd" style="left:736px;top:327px;width:17px;height:19px"></div>
<svg class="a" style="left:740px;top:334px" width="9" height="6" viewBox="0 0 9 6"><path d="M0.5 0.8 L4.5 4.8 L8.5 0.8" fill="none" stroke="#444" stroke-width="1.1"/></svg>
<div class="btn" style="left:166px;top:429px;width:20px;height:20px"></div>
<svg class="ic" style="left:168.0px;top:431.0px;width:16px;height:16px" viewBox="0 0 16 16"><use href="#first"/></svg>
<div class="btn" style="left:187px;top:429px;width:20px;height:20px"></div>
<svg class="ic" style="left:189.0px;top:431.0px;width:16px;height:16px" viewBox="0 0 16 16"><use href="#prev"/></svg>
<div class="btn" style="left:208px;top:429px;width:20px;height:20px"></div>
<svg class="ic" style="left:210.0px;top:431.0px;width:16px;height:16px" viewBox="0 0 16 16"><use href="#next"/></svg>
<div class="btn" style="left:229px;top:429px;width:20px;height:20px"></div>
<svg class="ic" style="left:231.0px;top:431.0px;width:16px;height:16px" viewBox="0 0 16 16"><use href="#last"/></svg>
<div class="btn" style="left:250px;top:429px;width:20px;height:20px"></div>
<svg class="ic" style="left:252.0px;top:431.0px;width:16px;height:16px" viewBox="0 0 16 16"><use href="#plus"/></svg>
<div class="btn" style="left:271px;top:429px;width:20px;height:20px"></div>
<svg class="ic" style="left:273.0px;top:431.0px;width:16px;height:16px" viewBox="0 0 16 16"><use href="#minus"/></svg>
<div class="btn" style="left:292px;top:429px;width:20px;height:20px"></div>
<svg class="ic" style="left:294.0px;top:431.0px;width:16px;height:16px" viewBox="0 0 16 16"><use href="#up"/></svg>
<div class="btnd" style="left:313px;top:429px;width:20px;height:20px"></div>
<svg class="ic" style="left:315.0px;top:431.0px;width:16px;height:16px" viewBox="0 0 16 16"><use href="#checkg"/></svg>
<div class="btnd" style="left:334px;top:429px;width:20px;height:20px"></div>
<svg class="ic" style="left:336.0px;top:431.0px;width:16px;height:16px" viewBox="0 0 16 16"><use href="#xg"/></svg>
<div class="in" style="left:434px;top:430px;width:121px;height:23px;z-index:3"></div>
<div class="btn" style="left:563px;top:431px;width:23px;height:20px"></div>
<div class="btn" style="left:587px;top:431px;width:23px;height:20px"></div>
<svg class="ic" style="left:566.5px;top:433.3px;width:16px;height:16px" viewBox="0 0 16 16"><use href="#funnelup"/></svg>
<svg class="ic" style="left:590.8px;top:433.3px;width:16px;height:16px" viewBox="0 0 16 16"><use href="#funnelx"/></svg>
<div class="hl" style="left:5px;top:452px;width:365px;background:#828282"></div>
<div class="hl" style="left:635px;top:452px;width:170px;background:#828282"></div>
<div class="vl" style="left:5px;top:452px;height:51px;background:#828282"></div>
<div class="vl" style="left:804px;top:452px;height:51px;background:#b4b4b4"></div>
<div class="hl" style="left:6px;top:473px;width:797px;background:#e0e0e0"></div>
<div class="hl" style="left:6px;top:493px;width:797px;background:#e0e0e0"></div>
<div class="vl" style="left:18px;top:453px;height:41px;background:#e0e0e0"></div>
<div class="vl" style="left:105px;top:453px;height:41px;background:#e0e0e0"></div>
<div class="vl" style="left:201px;top:453px;height:41px;background:#e0e0e0"></div>
<div class="vl" style="left:291px;top:453px;height:41px;background:#e0e0e0"></div>
<div class="vl" style="left:405px;top:453px;height:41px;background:#e0e0e0"></div>
<div class="vl" style="left:471px;top:453px;height:41px;background:#e0e0e0"></div>
<div class="vl" style="left:537px;top:453px;height:41px;background:#e0e0e0"></div>
<div class="vl" style="left:621px;top:453px;height:41px;background:#e0e0e0"></div>
<div class="vl" style="left:696px;top:453px;height:41px;background:#e0e0e0"></div>
<div class="vl" style="left:762px;top:453px;height:41px;background:#e0e0e0"></div>
<svg class="a" style="left:10px;top:478px" width="7" height="12" viewBox="0 0 7 12"><path d="M0.5 0.5 L6.5 6 L0.5 11.5 Z" fill="#000"/></svg>
<span class="t" style="left:29.92px;top:8.8px;color:#fff;transform:scaleX(0.9867);">Codes Maintenance @ TM183C [TMWIN - My Trucking Co Canada]</span>
<span class="t" style="left:7.53px;top:34.0px;color:#000;transform:scaleX(0.9722);">File</span>
<span class="t" style="left:39.64px;top:34.0px;color:#000;transform:scaleX(1.0551);">Multi-Company</span>
<span class="t" style="left:138.93px;top:34.0px;color:#000;transform:scaleX(0.9654);">View</span>
<span class="t" style="left:178.43px;top:34.0px;color:#000;transform:scaleX(0.9894);">Tools</span>
<span class="t" style="left:218.94px;top:34.0px;color:#000;transform:scaleX(1.0560);">Help</span>
<span class="t" style="left:726.43px;top:88.5px;color:#000;font-size:13px;transform:scaleX(0.9783);">All</span>
<span class="t" style="left:13.24px;top:113.8px;color:#000;transform:scaleX(0.9536);">Accessorial Charges</span>
<span class="t" style="left:92.13px;top:133.8px;color:#000;transform:scaleX(0.9727);">Code</span>
<span class="t" style="left:28.00px;top:157.8px;color:#000;">Short Description</span>
<span class="t" style="left:96.94px;top:181.8px;color:#000;transform:scaleX(0.9217);">Type</span>
<span class="t" style="left:23.70px;top:205.8px;color:#000;transform:scaleX(1.0052);">3rd party G/L Acct</span>
<span class="t" style="left:15.93px;top:229.8px;color:#000;transform:scaleX(0.9930);">TruckMate G/L Acct</span>
<span class="t" style="left:72.22px;top:253.8px;color:#000;transform:scaleX(0.9770);">Currency</span>
<span class="t" style="left:33.23px;top:277.8px;color:#000;transform:scaleX(0.9643);">Charge Behavior</span>
<span class="t" style="left:30.10px;top:350.8px;color:#000;">Long Description</span>
<span class="t" style="left:60.25px;top:401.8px;color:#98a8ab;transform:scaleX(0.9476);">Range Field</span>
<span class="t" style="left:126.75px;top:132.8px;color:#000;transform:scaleX(0.8853);">CHASBILL</span>
<span class="t" style="left:126.75px;top:156.8px;color:#000;transform:scaleX(0.8887);">CHASSIS BILLING ACCESSORIAL CHARGE</span>
<span class="t" style="left:127.24px;top:182.1px;color:#000;transform:scaleX(0.9027);">CHASSIS-BILLING</span>
<span class="t" style="left:125.80px;top:228.5px;color:#000;transform:scaleX(0.9653);">01-10-00-5007</span>
<span class="t" style="left:126.74px;top:252.8px;color:#000;transform:scaleX(0.9146);">CAD</span>
<span class="t" style="left:126.53px;top:277.8px;color:#000;transform:scaleX(0.9650);">Flat Charge</span>
<span class="t" style="left:368.94px;top:275.8px;color:#000;transform:scaleX(1.0594);">None</span>
<span class="t" style="left:368.80px;top:300.8px;color:#000;transform:scaleX(0.9036);">False</span>
<span class="t" style="left:292.76px;top:180.7px;color:#0000f0;font-size:11px;transform:scaleX(0.8935);text-decoration:underline;">Chassis Billing</span>
<span class="t" style="left:307.03px;top:133.8px;color:#000;transform:scaleX(0.9601);">Calc Order</span>
<span class="t" style="left:289.33px;top:204.8px;color:#000;transform:scaleX(0.9922);">Vendor-Client</span>
<span class="t" style="left:290.42px;top:228.8px;color:#000;transform:scaleX(0.9917);">Client-Vendor</span>
<span class="t" style="left:311.00px;top:251.8px;color:#000;">Split</span>
<span class="t" style="left:367.19px;top:251.8px;color:#000;transform:scaleX(1.0112);">Natural</span>
<span class="t" style="left:310.53px;top:275.8px;color:#000;transform:scaleX(0.9770);">Applies to</span>
<span class="t" style="left:286.43px;top:300.8px;color:#000;transform:scaleX(0.9814);">Applies To MP</span>
<span class="t" style="left:290.02px;top:401.8px;color:#000;transform:scaleX(0.9765);">Rate Mode</span>
<span class="t" style="left:485.01px;top:401.8px;color:#000;transform:scaleX(0.9912);">New Code</span>
<span class="t" style="left:667.14px;top:401.8px;color:#000;transform:scaleX(0.9125);">COPY</span>
<span class="t" style="left:593.86px;top:307.8px;color:#000;transform:scaleX(0.9371);">Lookup Date (TLORDER)</span>
<span class="t" style="left:12.63px;top:433.1px;color:#000;transform:scaleX(0.9699);">Flat Charge</span>
<span class="t" style="left:404.62px;top:434.5px;color:#000;transform:scaleX(0.9813);">Filter</span>
<span class="t" style="left:497.25px;top:122.8px;color:#000;transform:scaleX(1.0477);">Not Active</span>
<span class="t" style="left:498.23px;top:137.8px;color:#000;transform:scaleX(0.9620);">Vendor Code</span>
<span class="t" style="left:498.23px;top:152.8px;color:#000;transform:scaleX(0.9677);">Vendor Trip Prorate</span>
<span class="t" style="left:497.35px;top:167.8px;color:#838383;transform:scaleX(0.9483);">Roll Up Extra Stop Chrqs</span>
<span class="t" style="left:498.23px;top:182.8px;color:#000;transform:scaleX(1.0047);">Auto-Assign by Default</span>
<span class="t" style="left:497.30px;top:197.8px;color:#000;">Restricted Auto-Assign</span>
<span class="t" style="left:497.33px;top:212.8px;color:#000;transform:scaleX(0.9738);">Dangerous Goods Only</span>
<span class="t" style="left:498.23px;top:227.8px;color:#000;transform:scaleX(1.0070);">Temp Controlled Only</span>
<span class="t" style="left:498.02px;top:242.8px;color:#000;transform:scaleX(0.9930);">Custom Code Only</span>
<span class="t" style="left:497.31px;top:258.8px;color:#000;transform:scaleX(0.9894);">High Value Only</span>
<span class="t" style="left:498.23px;top:274.8px;color:#838383;transform:scaleX(0.9791);">Assign To All Vendors</span>
<span class="t" style="left:643.20px;top:122.8px;color:#000;transform:scaleX(0.9790);">Interliner Charges</span>
<span class="t" style="left:643.19px;top:138.8px;color:#000;transform:scaleX(0.9925);">Include Child Bills</span>
<span class="t" style="left:644.14px;top:154.8px;color:#000;transform:scaleX(0.8535);">Tax 1</span>
<span class="t" style="left:644.14px;top:170.8px;color:#000;transform:scaleX(0.8987);">Tax 2</span>
<span class="t" style="left:644.16px;top:186.8px;color:#000;transform:scaleX(0.9481);">Web Enabled</span>
<span class="t" style="left:643.20px;top:204.8px;color:#000;transform:scaleX(0.9817);">IC Copy</span>
<span class="t" style="left:708.01px;top:201.8px;color:#a3a3a3;transform:scaleX(0.9728);">IP Acc Code</span>
<span class="t" style="left:708.00px;top:239.8px;color:#a3a3a3;transform:scaleX(0.9751);">IC Acc Code</span>
<span class="t" style="left:639.25px;top:226.8px;color:#000;transform:scaleX(0.9473);">Fuel Price</span>
<span class="t" style="left:643.23px;top:251.8px;color:#838383;transform:scaleX(0.9476);">Vendors</span>
<span class="t" style="left:629.65px;top:275.8px;color:#838383;transform:scaleX(0.9451);">Restricted FB</span>
<span class="t" style="left:649.94px;top:290.8px;color:#838383;transform:scaleX(0.8995);">Types</span>
<span class="t" style="left:21.23px;top:456.8px;color:#000;transform:scaleX(0.9686);">Charge</span>
<span class="t" style="left:107.03px;top:456.8px;color:#000;transform:scaleX(0.9662);">Start Date</span>
<span class="t" style="left:203.65px;top:456.8px;color:#000;transform:scaleX(0.9512);">End Date</span>
<span class="t" style="left:294.33px;top:456.8px;color:#000;transform:scaleX(0.9637);">Vendor ID</span>
<span class="t" style="left:407.02px;top:456.8px;color:#000;transform:scaleX(0.9802);">Start Zone</span>
<span class="t" style="left:473.01px;top:456.8px;color:#000;transform:scaleX(0.9925);">End Zone</span>
<span class="t" style="left:540.33px;top:456.8px;color:#000;transform:scaleX(0.9882);">Allow Between</span>
<span class="t" style="left:623.27px;top:456.8px;color:#000;transform:scaleX(0.9258);">Rate Sheet ID</span>
<span class="t" style="left:699.24px;top:456.8px;color:#000;transform:scaleX(0.9242);">Calc Seq</span>
<span class="t" style="left:764.26px;top:456.8px;color:#000;transform:scaleX(0.9411);">Service</span>
<span class="t" style="left:90.30px;top:476.8px;color:#000;transform:scaleX(0.9007);">55</span>
<span class="t" style="left:107.00px;top:476.8px;color:#000;">1/1/2018</span>
<span class="t" style="left:203.65px;top:476.8px;color:#000;transform:scaleX(0.9527);">12/31/2018 11:59</span>
<span class="t" style="left:540.33px;top:476.8px;color:#000;transform:scaleX(1.0103);">True</span>
<span class="t" style="left:686.01px;top:476.8px;color:#000;">0</span>
<span class="t" style="left:752.01px;top:476.8px;color:#000;">0</span>
</div>
</body></html>
